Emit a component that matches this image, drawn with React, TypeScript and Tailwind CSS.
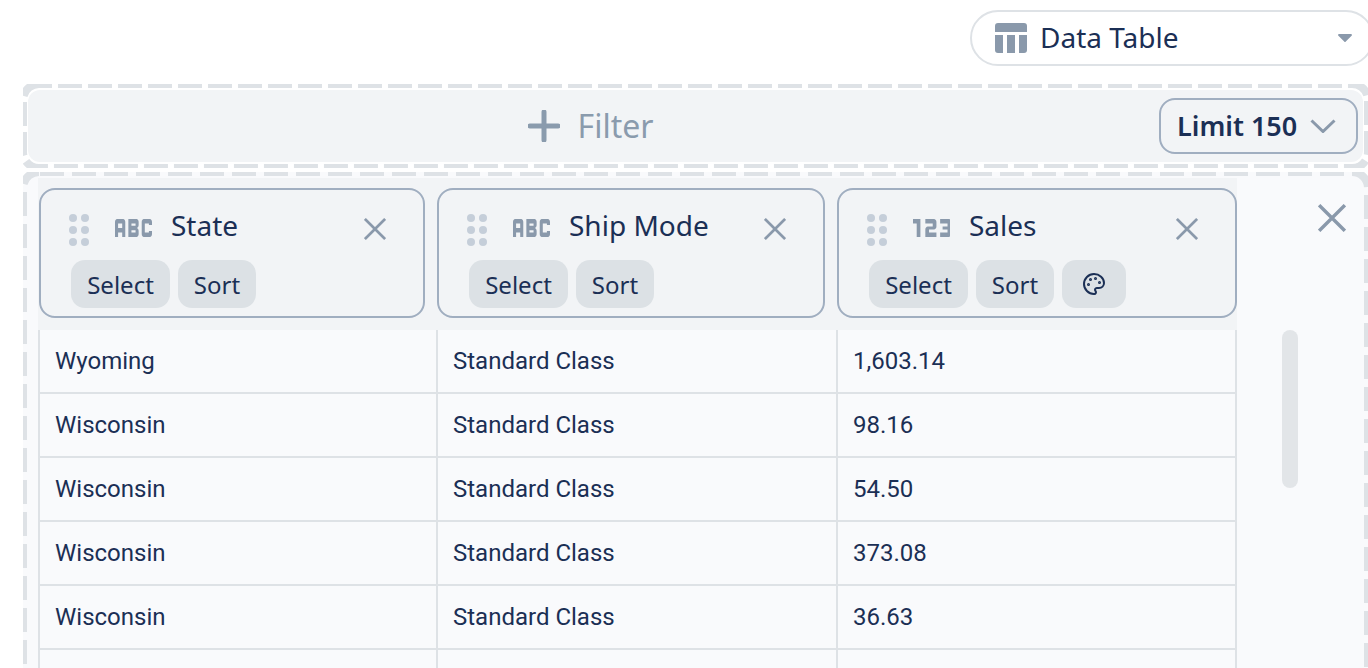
import { Palette } from "lucide-react";
import { Md123, MdAbc } from "react-icons/md";

const rows = [
  ["Wyoming", "Standard Class", "1,603.14"],
  ["Wisconsin", "Standard Class", "98.16"],
  ["Wisconsin", "Standard Class", "54.50"],
  ["Wisconsin", "Standard Class", "373.08"],
  ["Wisconsin", "Standard Class", "36.63"],
  ["", "", ""],
];

// the dashes are longer than a css dashed border can give
const DashedEdge = ({ gap, offset }: { gap: number; offset: number }) => (
  <svg className="absolute inset-0 w-full h-full pointer-events-none">
    <rect
      width="100%"
      height="100%"
      rx="16"
      ry="16"
      fill="none"
      stroke="#dee2e6"
      strokeWidth="8"
      strokeDasharray={`24 ${gap}`}
      strokeDashoffset={offset}
    />
  </svg>
);

const CloseIcon = ({ size }: { size: number }) => (
  <svg width={size} height={size} viewBox="0 0 24 24" className="text-[#8a99ab]">
    <path d="M1 1 23 23M23 1 1 23" stroke="currentColor" strokeWidth="2.9" fill="none" />
  </svg>
);

const DragDots = () => (
  <svg width="20" height="32" viewBox="0 0 20 32" className="text-[#c5ced9]">
    {[4, 16, 28].map((cy) => (
      <g key={cy} fill="currentColor">
        <circle cx="4" cy={cy} r="4" />
        <circle cx="16" cy={cy} r="4" />
      </g>
    ))}
  </svg>
);

const TableIcon = () => (
  <svg width="32" height="30" viewBox="0 0 32 30" className="text-[#8a99ab]">
    <path
      fill="currentColor"
      d="M3 0h26a3 3 0 0 1 3 3v6H0V3a3 3 0 0 1 3-3ZM0 12h8v18H3a3 3 0 0 1-3-3ZM12 12h8v18h-8ZM24 12h8v15a3 3 0 0 1-3 3h-5Z"
    />
  </svg>
);

const ColumnCard = ({
  title,
  numeric,
  width,
}: {
  title: string;
  numeric?: boolean;
  width: string;
}) => (
  <div className={`${width} h-[130px] shrink-0 rounded-[16px] border-2 border-[#a0aec0] pl-[30px] pr-[36px]`}>
    <div className="flex items-center h-[70px]">
      <div className="w-[46px] -ml-[2px] pt-[10px]">
        <DragDots />
      </div>
      <div className="w-[56px] pt-[5px] text-[#8a99ab]">
        {numeric ? (
          <Md123 viewBox="4 9 15 6" preserveAspectRatio="none" className="w-[37px] h-[18px]" />
        ) : (
          <MdAbc viewBox="3 9 18 6" preserveAspectRatio="none" className="w-[37px] h-[18px]" />
        )}
      </div>
      <span className="text-[28px] leading-[38px]">{title}</span>
      <div className="ml-auto pt-[7px] pr-[1px]">
        <CloseIcon size={22} />
      </div>
    </div>
    <div className="flex gap-2">
      <button className="w-[99px] h-[48px] pt-[2px] rounded-[14px] bg-[#dce1e5] text-[24px]">Select</button>
      <button className="w-[78px] h-[48px] pt-[2px] rounded-[14px] bg-[#dce1e5] text-[24px]">Sort</button>
      {numeric && (
        <button className="w-[64px] h-[48px] rounded-[14px] bg-[#dce1e5] flex items-center justify-center">
          <Palette size={24} strokeWidth={2} />
        </button>
      )}
    </div>
  </div>
);

export default function App() {
  return (
    <div
      className="w-[1368px] h-[668px] overflow-hidden bg-white text-[#1b2f55]"
      style={{ fontFamily: '"Noto Sans", sans-serif' }}
    >
      <div className="flex justify-end pt-[10px]">
        <div className="w-[404px] -mr-[6px] shrink-0 h-[56px] rounded-full border-2 border-[#dee2e6] flex items-center pl-[23px] pr-[20px]">
          <TableIcon />
          <span className="ml-[13px] -mt-[2px] text-[28px]">Data Table</span>
          <svg width="14" height="8" viewBox="0 0 14 8" className="ml-auto text-[#8a99ab]">
            <path fill="currentColor" d="M1.2 0h11.6c1 0 1.5 1.100.8 1.800L7.800 7.600a1 1 0 0 1-1.600 0L.4 1.800C-.3 1.100.2 0 1.200 0Z" />
          </svg>
        </div>
      </div>

      <div className="relative ml-[23px] mt-[18px] h-[84px] px-[5px] py-[6px]">
        <DashedEdge gap={6} offset={11} />
        <div className="relative h-full rounded-[12px] bg-[#f2f4f6] flex items-center justify-center">
          <div className="flex items-center text-[#8a9bad] -ml-[210px]">
            <svg width="32" height="32" viewBox="0 0 32 32">
              <path d="M16 2v28M2 16h28" stroke="currentColor" strokeWidth="5" strokeLinecap="round" />
            </svg>
            <span className="ml-[18px] text-[32px] leading-[44px]">Filter</span>
          </div>
          <div className="absolute right-[5px] top-[8px] w-[199px] h-[56px] rounded-[16px] border-2 border-[#a0aec0] flex items-center pl-[16px]">
            <span className="text-[27px] font-semibold">Limit 150</span>
            <svg width="26" height="14" viewBox="0 0 26 14" className="ml-[13px] text-[#8a99ab]">
              <path d="M1.500 1.500 13 12.500 24.500 1.500" stroke="currentColor" strokeWidth="3" fill="none" />
            </svg>
          </div>
        </div>
      </div>

      <div className="relative ml-[23px] mt-[4px] w-[1345px] h-[520px] rounded-[16px] bg-[#f9fafc] flex pl-[15px] pt-[6px]">
        <DashedEdge gap={8} offset={-1} />
        <div className="w-[1199px] shrink-0">
          <div className="h-[152px] bg-[#f2f4f6] flex pt-[10px] pl-[1px] gap-[12px]">
            <ColumnCard title="State" width="w-[386px]" />
            <ColumnCard title="Ship Mode" width="w-[388px]" />
            <ColumnCard title="Sales" numeric width="w-[400px]" />
          </div>
          {rows.map((row, i) => (
            <div
              key={i}
              className="grid grid-cols-[398px_400px_401px] h-[64px] border-b-2 border-[#dee2e6] text-[24px]"
              style={{ fontFamily: "Roboto, sans-serif" }}
            >
              {row.map((cell, j) => (
                <div
                  key={j}
                  className={`border-l-2 border-[#dee2e6] pl-[15px] flex items-center h-[62px] ${j === 2 ? "border-r-2" : ""}`}
                >
                  {cell}
                </div>
              ))}
            </div>
          ))}
        </div>
        <div className="flex-1 flex flex-col pt-[26px] pl-[81px]">
          <CloseIcon size={28} />
          <div className="w-[16px] h-[158px] mt-[98px] -ml-[36px] rounded-full bg-[#e2e5e8]" />
        </div>
      </div>
    </div>
  );
}
